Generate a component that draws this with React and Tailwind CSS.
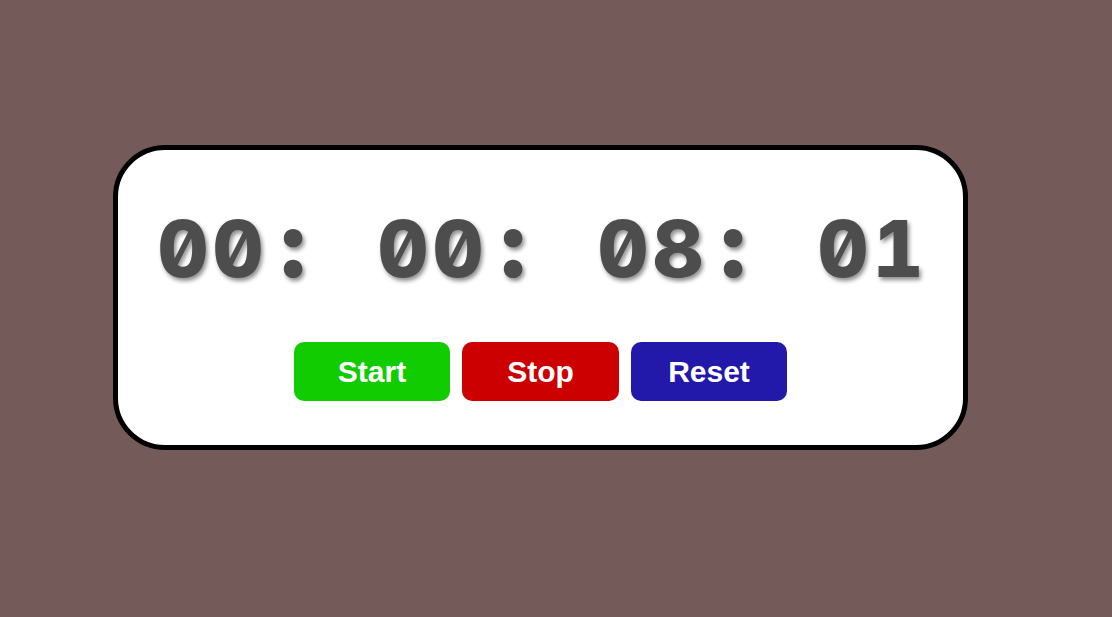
const chars = '00: 00: 08: 01'.split('');

export default function App() {
  return (
    <div className="min-h-[617px] w-full bg-[#755a5a] pt-[145px] pl-[113px]">
      <div className="w-[855px] h-[305px] bg-white border-[5px] border-black rounded-[52px] flex flex-col items-center">
        <div
          className="mt-[44px] h-[100px] flex items-baseline text-[79px] leading-[100px] font-extrabold text-[#4d4d4d] [text-shadow:2px_3px_4px_rgba(0,0,0,0.45)]"
          style={{ fontFamily: 'Inter, "Noto Sans", sans-serif', fontFeatureSettings: '"zero" 1, "tnum" 1' }}
        >
          {chars.map((c, i) =>
            c === ':' ? (
              <span key={i} className="w-[55px] text-center text-[92px] font-black">:</span>
            ) : (
              <span key={i} className="w-[55px] text-center whitespace-pre">{c}</span>
            )
          )}
        </div>
        <div className="mt-[48px] flex gap-[12px]" style={{ fontFamily: '"Liberation Sans", Arial, sans-serif' }}>
          <button className="w-[156px] h-[59px] rounded-[10px] bg-[#11cc00] text-white font-bold text-[30px]">Start</button>
          <button className="w-[157px] h-[59px] rounded-[10px] bg-[#cc0000] text-white font-bold text-[30px]">Stop</button>
          <button className="w-[156px] h-[59px] rounded-[10px] bg-[#2219aa] text-white font-bold text-[30px]">Reset</button>
        </div>
      </div>
    </div>
  );
}
